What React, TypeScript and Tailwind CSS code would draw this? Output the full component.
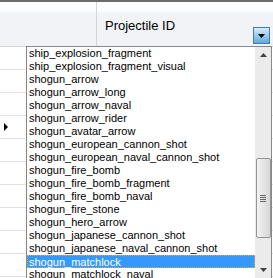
import React from "react";

const items = [
  "ship_explosion_fragment",
  "ship_explosion_fragment_visual",
  "shogun_arrow",
  "shogun_arrow_long",
  "shogun_arrow_naval",
  "shogun_arrow_rider",
  "shogun_avatar_arrow",
  "shogun_european_cannon_shot",
  "shogun_european_naval_cannon_shot",
  "shogun_fire_bomb",
  "shogun_fire_bomb_fragment",
  "shogun_fire_bomb_naval",
  "shogun_fire_stone",
  "shogun_hero_arrow",
  "shogun_japanese_cannon_shot",
  "shogun_japanese_naval_cannon_shot",
  "shogun_matchlock",
  "shogun_matchlock_naval",
];

export default function App() {
  const rows = Array.from({ length: 10 });
  return (
    <div
      className="relative w-[273px] h-[278px] overflow-hidden bg-white"
      style={{ fontFamily: '"Liberation Sans", Arial, sans-serif' }}
    >
      <div className="h-[2px] bg-[#6b6b6b]" />
      <div className="flex h-[45px] border-b border-[#d5d5d5] bg-gradient-to-b from-[#fdfdfd] from-20% to-[#f1f3f6] to-25%">
        <div className="w-[97px] border-r border-[#d5d5d5]" />
        <div className="flex-1 relative">
          <div className="absolute left-[8px] top-[16px] text-[13px] text-black leading-[16px]">
            Projectile ID
          </div>
          <div className="absolute left-[156px] top-[25px] w-[17px] h-[17px] border border-[#3c7fb1] bg-gradient-to-b from-[#d6ecfa] to-[#5ea9dc] flex items-center justify-center">
            <svg width="7" height="4" viewBox="0 0 7 4">
              <polygon points="0,0 7,0 3.5,4" fill="#000" />
            </svg>
          </div>
        </div>
      </div>
      <div>
        {rows.map((_, i) => (
          <div key={i} className="flex h-[23px] border-b border-[#e2e2e2]">
            <div className="w-[8px] flex items-center justify-start pl-[4px]">
              {i === 3 && (
                <svg width="4" height="8" viewBox="0 0 4 8">
                  <polygon points="0,0 4,4 0,8" fill="#000" />
                </svg>
              )}
            </div>
            <div className="w-[89px] border-r border-[#e2e2e2]" />
            <div className="flex-1" />
          </div>
        ))}
      </div>
      <div className="absolute left-[26px] top-[46px] w-[246px] h-[240px] border border-[#828790] bg-white flex">
        <div className="flex-1 flex flex-col">
          {items.map((t, i) => (
            <div
              key={t}
              className={
                i === 16
                  ? "h-[13px] leading-[13px] text-[11px] pl-[1px] bg-[#3399ff] text-white border border-dotted border-[#e0a060]"
                  : "h-[13px] leading-[13px] text-[11px] pl-[2px] text-black whitespace-nowrap"
              }
            >
              {t}
            </div>
          ))}
        </div>
        <div className="w-[16px] h-[231px] bg-[#ebebeb] flex flex-col items-center">
          <div className="h-[16px] w-full flex items-center justify-center">
            <svg width="7" height="4" viewBox="0 0 7 4">
              <polygon points="0,4 7,4 3.5,0" fill="#404040" />
            </svg>
          </div>
          <div className="h-[95px]" />
          <div className="w-[15px] h-[80px] rounded-[2px] border border-[#959595] bg-gradient-to-r from-[#f2f2f2] to-[#d7d7d7] flex flex-col items-center justify-center gap-[1px]">
            <div className="w-[6px] h-[1px] bg-[#666]" />
            <div className="w-[6px] h-[1px] bg-[#666]" />
            <div className="w-[6px] h-[1px] bg-[#666]" />
            <div className="w-[6px] h-[1px] bg-[#666]" />
          </div>
          <div className="flex-1" />
          <div className="h-[16px] w-full flex items-center justify-center">
            <svg width="7" height="4" viewBox="0 0 7 4">
              <polygon points="0,0 7,0 3.5,4" fill="#404040" />
            </svg>
          </div>
        </div>
      </div>
    </div>
  );
}
